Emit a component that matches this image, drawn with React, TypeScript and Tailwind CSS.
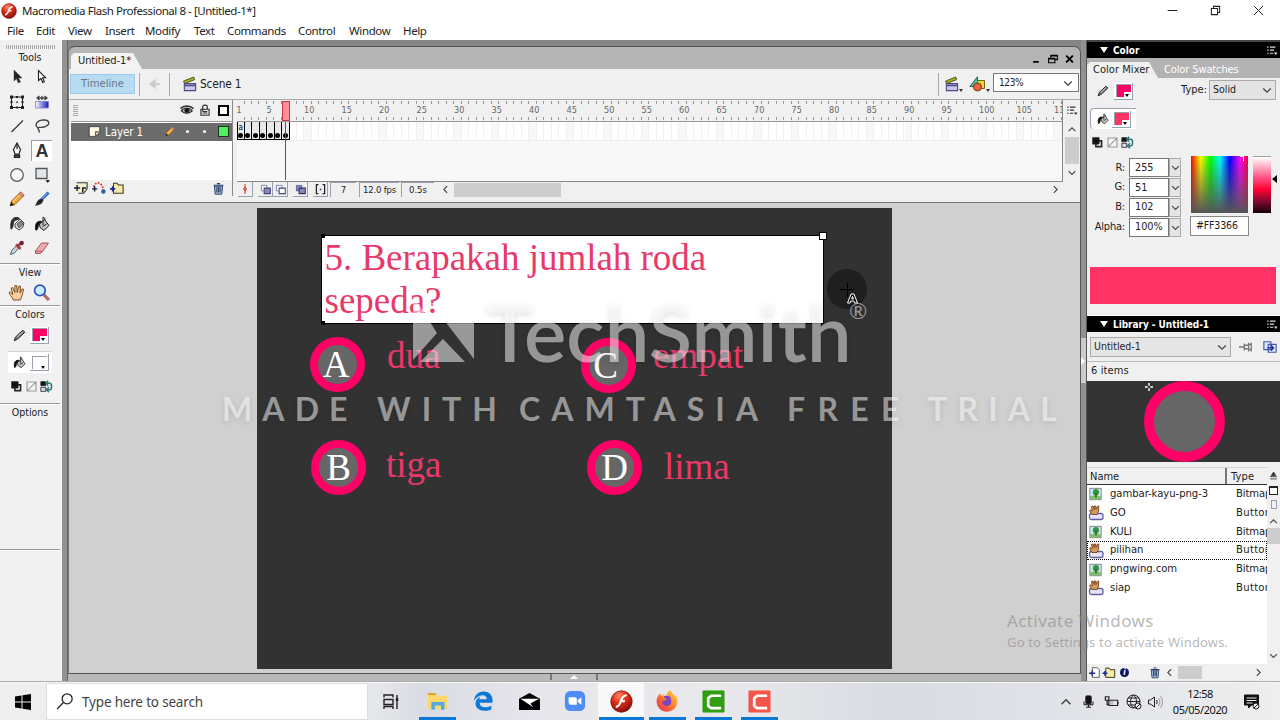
import React from "react";
import { FaFirefoxBrowser } from "react-icons/fa";

type IconProps = { className?: string; children: React.ReactNode; box?: string };

function Icon({ className = "h-4 w-4", children, box = "0 0 16 16" }: IconProps) {
  return (
    <svg viewBox={box} className={`shrink-0 ${className}`} fill="none" stroke="#333" strokeWidth="1">
      {children}
    </svg>
  );
}

function FlashLogo({ className }: { className?: string }) {
  return (
    <Icon className={className} box="0 0 24 24">
      <defs>
        <radialGradient id="flashRed" cx="40%" cy="25%" r="80%">
          <stop offset="0" stopColor="#ff8a6a" />
          <stop offset="0.45" stopColor="#dd2c16" />
          <stop offset="1" stopColor="#7c0d06" />
        </radialGradient>
      </defs>
      <circle cx="12" cy="12" r="11.2" fill="url(#flashRed)" stroke="#6d2018" strokeWidth="0.8" />
      <path d="M17.5 5.500c-4 0-5.200 3-6.200 6.200s-2 5.800-5.300 5.900M10.500 11.600h5" stroke="#fff" strokeWidth="2.200" />
    </Icon>
  );
}

function Pencil({ color = "#f3a63a", className }: { color?: string; className?: string }) {
  return (
    <Icon className={className}>
      <path d="M1 15l1.5-5L11 1.5 14.5 5 6 13.5z" fill={color} stroke="#7a4b16" strokeWidth=".8" />
      <path d="M10 2.5L12 .8 15.3 4 13.5 6z" fill="#e58d84" stroke="#944" strokeWidth=".6" />
      <path d="M1 15l1.2-4 3 3z" fill="#222" stroke="none" />
      <path d="M4 10.5L11 3.6" stroke="#ffe3a0" />
    </Icon>
  );
}

function PenTip({ className }: { className?: string }) {
  return (
    <Icon className={className}>
      <path d="M1.500 14.500l1.500-4.500L12 1.500 14.500 4 5.500 12.500z" fill="#777" stroke="#222" strokeWidth="1.200" />
      <path d="M5 10l7-6.500" stroke="#ddd" strokeWidth="1.200" />
    </Icon>
  );
}

function Bucket({ className }: { className?: string }) {
  return (
    <Icon className={className}>
      <path d="M5.500 8l5-4.500 4.500 6-5 5-4-3z" fill="#c4c4c4" stroke="#222" />
      <path d="M9 9V1.200c1.500 0 2 1 2 3M8.500 10.500l4-2.500" stroke="#222" />
      <path d="M7.500 5.500C3 4.500.8 7.500 1.800 14c2 .5 2.200-3 2.700-5z" fill="#111" stroke="#111" />
    </Icon>
  );
}

function InkBottle({ className }: { className?: string }) {
  return (
    <Icon className={className}>
      <path d="M6 8l5-5 4 4-1 4-4 3-4-3z" fill="#ddd" stroke="#444" />
      <path d="M8 8l4-3 2 3-4 4z" fill="#888" stroke="#555" />
      <path d="M10 2C4 0 1 4 2 13c2 0 2-4 2.500-7 1-2 3-2 5.500-3z" fill="#333" stroke="#222" />
    </Icon>
  );
}

function Trash({ className }: { className?: string }) {
  return (
    <Icon className={className}>
      <path d="M3 5h10l-1 10H4z" fill="#a7bfdf" stroke="#283f66" strokeWidth="1.2" />
      <path d="M2 4h12M6 2h4M6 6v7M8 6v7M10 6v7" stroke="#283f66" strokeWidth="1.3" />
    </Icon>
  );
}

function FolderAdd({ className }: { className?: string }) {
  return (
    <Icon className={className}>
      <path d="M4 4V2.500h4L9.500 4.500H15V14H4z" fill="#f5e9ab" stroke="#3d3512" strokeWidth="1.200" />
      <path d="M0 9h6M3 6v6" stroke="#1c2c8c" strokeWidth="1.800" />
    </Icon>
  );
}

function SwapRow() {
  return (
    <div className="flex gap-[2px]">
      <Icon className="h-[13px] w-[13px]">
        <path d="M6 6h7v7H6z" fill="#fff" stroke="#222" strokeWidth="2" />
        <path d="M2 2h8v8H2z" fill="#111" />
      </Icon>
      <Icon className="h-[13px] w-[13px]">
        <path d="M2.500 2.500h11v11h-11zM3 13L13 3" fill="#f5f5f5" stroke="#999" strokeWidth="1.400" />
      </Icon>
      <Icon className="h-[13px] w-[13px]">
        <path d="M1 2h6v5H1z" fill="#111" />
        <path d="M1 9h6v5H1z" fill="#ddd" stroke="#223" />
        <path d="M8 4h4c3 0 3 8 0 8H9M10 1L7.500 4l2.500 3M11 9l-3 3 3 3" stroke="#277878" strokeWidth="1.800" />
      </Icon>
    </div>
  );
}

function Swatch({ pink, tone }: { pink: boolean; tone?: boolean }) {
  const fill = pink ? (tone ? "bg-[#ff3366]" : "bg-[#ff0066]") : "bg-white";
  return (
    <div className="flex h-[17px] w-[19px] items-center justify-center border-r border-b border-gray-400 bg-white">
      <div className={`flex h-[13px] w-[15px] items-end justify-end border-t border-l border-gray-400 ${fill}`}>
        <div className="flex h-[5px] w-[7px] items-end justify-center bg-white">
          <div className="h-0 w-0 border-x-[2.5px] border-t-[3px] border-x-transparent border-t-black" />
        </div>
      </div>
    </div>
  );
}

function Chevron({ dir = "down", className = "h-[10px] w-[10px]" }: { dir?: string; className?: string }) {
  const d: Record<string, string> = {
    down: "M2 5.500l6 6 6-6",
    up: "M2 11l6-6 6 6",
    left: "M11 2L5 8l6 6",
    right: "M5 2l6 6-6 6",
  };
  return (
    <Icon className={className}>
      <path d={d[dir]} stroke="#444" strokeWidth="2" />
    </Icon>
  );
}

function MenuGlyph({ color }: { color: string }) {
  return (
    <Icon className="h-[11px] w-[12px]">
      <path d="M1 3h2M5 3h8M1 7.500h2M5 7.500h6M1 12h2M5 12h5" stroke={color} strokeWidth="1.700" />
      <path d="M11 11h5l-2.500 3.500z" fill={color} stroke="none" />
    </Icon>
  );
}

function Clapper({ className = "h-[14px] w-[15px]" }: { className?: string }) {
  return (
    <Icon className={className}>
      <path d="M1.500 5l11-4.500 1 2.800L3 7.500z" fill="#a3ad2c" stroke="#4b5113" />
      <path d="M2.500 7.500h12v7.500h-12z" fill="#c9c7ee" stroke="#4e4a83" strokeWidth="1.200" />
      <path d="M3 9.500h11" stroke="#4e4a83" strokeWidth="2" />
    </Icon>
  );
}

const toolIcons: React.ReactNode[] = [
  <Icon><path d="M5 1v11l2.500-2.200L9.300 14l2.200-1-1.900-4H13z" fill="#222" stroke="#555" strokeWidth=".6" /></Icon>,
  <Icon><path d="M4.500 1.500v10l2.500-2 1.700 4 1.700-.7-1.800-4h3z" fill="#fff" stroke="#222" strokeWidth="1.100" /></Icon>,
  <Icon>
    <path d="M2.500 3h11v10.500h-11z" stroke="#222" />
    <path d="M1 1.500h3v3H1zM12 1.500h3v3h-3zM1 12h3v3H1zM12 12h3v3h-3zM7 2h2v2H7zM7 12.500h2v2H7zM1.500 7h2v2h-2zM12.500 7h2v2h-2zM7.300 7.500h1.500V9H7.300z" fill="#222" stroke="none" />
  </Icon>,
  <Icon>
    <defs><linearGradient id="toolBlue"><stop stopColor="#fff" /><stop offset="1" stopColor="#1a17b8" /></linearGradient></defs>
    <path d="M1.500 7.500h13V14h-13z" fill="url(#toolBlue)" stroke="#7780c8" strokeWidth=".8" />
    <path d="M3 4h10M5.500 2L3 4l2.500 2M10.500 2L13 4l-2.500 2M8 2v4" stroke="#444" strokeWidth="1.300" />
  </Icon>,
  <Icon><path d="M2.500 14L14 2.500" stroke="#333" strokeWidth="1.200" /></Icon>,
  <Icon><path d="M4.500 10C0 8 2 2.500 9 2s8 5 1 7c-3 1-6-.5-6 1.500s2 1 1 4" stroke="#444" strokeWidth="1.400" /></Icon>,
  <Icon>
    <path d="M8 1l3.500 6.500L10 12H6L4.500 7.500z" fill="#fff" stroke="#222" strokeWidth="1.200" />
    <path d="M8 2v5M5.500 13h5v2.500h-5z" fill="#556" stroke="#222" strokeWidth="1.300" />
  </Icon>,
  <span className="font-['Liberation_Sans',sans-serif] text-[18px] leading-none font-bold text-[#333]">A</span>,
  <Icon><circle cx="8" cy="8" r="6.300" fill="#f7f7f7" stroke="#555" strokeWidth="1.200" /></Icon>,
  <Icon>
    <path d="M2 1.500h11v10H2z" fill="#dfe7ec" stroke="#555" strokeWidth="1.300" />
    <path d="M11.500 13.300h4.500l-2.200 2.500z" fill="#000" stroke="none" />
  </Icon>,
  <Pencil className="h-4 w-4" />,
  <Icon>
    <path d="M14.500 1.500L7 9" stroke="#2b5fc4" strokeWidth="3" />
    <path d="M13.500 2L7 8.500" stroke="#9cc3ff" />
    <path d="M8 8l1 1.500c-1 4-4 4-7.500 5 1.500-2 1.500-5 4-6z" fill="#222" stroke="#223" strokeWidth=".6" />
  </Icon>,
  <InkBottle className="h-4 w-4" />,
  <Bucket className="h-4 w-4" />,
  <Icon>
    <path d="M1.500 14.500L3 10l5-4.500 2 2L5.500 13z" fill="#bcd8ea" stroke="#456" strokeWidth=".9" />
    <path d="M7 4.500l4.500 4.500M9 6l3.500-3.500" stroke="#b03a42" strokeWidth="2.800" />
    <circle cx="12.700" cy="3" r="2.200" fill="#6c2530" stroke="none" />
  </Icon>,
  <Icon><path d="M1.500 11L7.500 3h7l-6 8.500-2 2h-5zM8.500 11.500l-7-.3" fill="#f0a9ad" stroke="#9a5a5e" /></Icon>,
];

function ToolSeparator() {
  return <div className="h-[2px] w-[60px] border-t border-[#999] bg-white" />;
}

function ToolsPanel() {
  return (
    <aside className="flex w-[62px] shrink-0 flex-col bg-[#f1f1f1] text-[10.500px] text-[#222]">
      <div className="mt-[5px] ml-[6px] h-[4px] w-[50px] bg-[repeating-linear-gradient(90deg,#aaa_0_1px,transparent_1px_2px)]" />
      <div className="h-[16px] w-[60px] text-center leading-[17px]">Tools</div>
      <div className="ml-1 grid w-[50px] grid-cols-2">
        {toolIcons.map((icon, i) => (
          <div key={i} className="flex h-[24.400px] items-center justify-center">
            {i === 7 ? (
              <div className="flex h-[21px] w-[21px] items-center justify-center border-t border-l border-gray-400 bg-white">{icon}</div>
            ) : (
              icon
            )}
          </div>
        ))}
      </div>
      <div className="h-[3px]" />
      <ToolSeparator />
      <div className="h-[15px] w-[60px] text-center leading-[15px]">View</div>
      <div className="ml-1 grid h-[25px] w-[50px] grid-cols-2 place-items-center">
        <Icon className="h-[17px] w-[17px]">
          <path d="M5 15c-1-3-4-5-4-7l1-.7L4.500 10 3 4l1.500-.7L6.500 8V1.500h1.600L8.700 8l1.500-6h1.500l-.3 6.500 2-4 1.300.5c-1 4-1.500 7-3 10z" fill="#f8cf9a" stroke="#77461f" strokeWidth=".9" />
        </Icon>
        <Icon className="h-[17px] w-[17px]">
          <path d="M10 10l5 5" stroke="#b46a68" strokeWidth="3" />
          <circle cx="6.500" cy="6" r="5" fill="#c9ecff" stroke="#2e55bd" strokeWidth="1.600" />
        </Icon>
      </div>
      <ToolSeparator />
      <div className="h-[16px] w-[60px] text-center leading-[15px]">Colors</div>
      <div className="ml-2 flex h-[24px] w-[44px] items-center gap-[4px] pl-[5px]">
        <PenTip className="h-[13px] w-[13px]" />
        <Swatch pink />
      </div>
      <div className="mt-[4px] ml-2 flex h-[22px] w-[44px] items-center gap-[4px] border-t border-gray-300 bg-white pl-[5px]">
        <Bucket className="h-[13px] w-[13px]" />
        <Swatch pink={false} />
      </div>
      <div className="mt-[7px] ml-[10px] h-[23px]">
        <SwapRow />
      </div>
      <ToolSeparator />
      <div className="h-[15px] w-[60px] text-center leading-[15px]">Options</div>
      <div className="mt-[129px]">
        <ToolSeparator />
      </div>
    </aside>
  );
}

function Timeline() {
  const labels = [1];
  for (let n = 5; n <= 110; n += 5) labels.push(n);
  return (
    <section className="flex h-[104px] shrink-0 border-t border-b border-t-[#aaa] border-b-[#777] bg-[#f0f0f0] pb-[6px]">
      <div className="flex w-[164px] shrink-0 flex-col border-r border-[#888] pl-[2px]">
        <div className="flex h-[22px] items-center border-b border-[#999] pr-[3px]">
          <div className="mr-auto ml-[2px] h-[11px] w-[5px] bg-[repeating-linear-gradient(0deg,#aaa_0_1px,transparent_1px_2px)]" />
          <Icon className="mr-[5px] h-[14px] w-[14px]">
            <path d="M1.500 9c3-4 10-4 12.500 0-4 3.500-8.500 3.500-12.500 0z" fill="#bbb" stroke="#222" strokeWidth="1.300" />
            <path d="M.5 6.500C4 3 11 2.500 15.500 6.500" stroke="#333" strokeWidth="2" />
            <circle cx="8" cy="8.500" r="2.600" fill="#111" />
          </Icon>
          <Icon className="mr-[7px] h-[14px] w-[12px]">
            <path d="M2.500 7h11v8h-11z" fill="#ddd" stroke="#333" strokeWidth="1.500" />
            <path d="M5 10V3c1-2 5-2 6 0v4M5 10h6M5 12h6" stroke="#333" strokeWidth="1.600" />
          </Icon>
          <div className="h-[11px] w-[11px] border-2 border-black bg-white" />
        </div>
        <div className="flex h-[19px] items-center border-t border-white bg-[#6c6c6c] pr-[3px] pl-[17px]">
          <Icon className="h-[13px] w-[13px]">
            <path d="M1.500 2h13v7l-5 5h-8z" fill="#fffbe5" stroke="#333" />
            <path d="M14.500 8.500h-5V14" stroke="#554" strokeWidth="1.500" />
          </Icon>
          <span className="ml-[4px] pt-px text-[11.500px] tracking-[-0.100px] text-white">Layer 1</span>
          <Pencil className="mr-[11px] ml-auto h-[13px] w-[10px]" />
          <div className="mr-[14px] h-[3px] w-[3px] rounded-full bg-white" />
          <div className="mr-[12px] h-[3px] w-[3px] rounded-full bg-white" />
          <div className="h-[11px] w-[11px] border border-[#173817] bg-[#55f060]" />
        </div>
        <div className="h-[40px] bg-white" />
        <div className="flex h-[16px] items-center gap-[4px] pr-[7px] pl-[3px]">
          <Icon className="h-[14px] w-[14px]">
            <path d="M3 2h12v7l-4 5H5" fill="#f3efc8" stroke="#333" strokeWidth="1.200" />
            <path d="M14 8h-4v5M0 8h7M3.500 4.500v7" stroke="#223" strokeWidth="1.700" />
          </Icon>
          <Icon className="h-[14px] w-[14px]">
            <path d="M2 7c2-7 9-7 11 3" stroke="#d33" strokeWidth="2" strokeDasharray="2 1.500" />
            <path d="M0 9h6M3 6v6" stroke="#223" strokeWidth="1.700" />
            <circle cx="13" cy="12" r="2.500" fill="#335aa6" stroke="none" />
          </Icon>
          <FolderAdd className="h-[14px] w-[14px]" />
          <Trash className="ml-auto h-[13px] w-[13px]" />
        </div>
      </div>
      <div className="flex min-w-0 flex-1 flex-col">
        <div className="flex h-[82px]">
          <div className="ml-[4px] flex w-[827px] flex-col border-r border-b border-[#888]">
            <div className="relative h-[22px] overflow-hidden border-b border-[#999]">
              <div className="h-[3px] w-full translate-y-px bg-[repeating-linear-gradient(90deg,transparent_0_6.500px,#999_6.500px_7.500px)]" />
              <div className="mt-[13px] h-[3px] w-full translate-y-px bg-[repeating-linear-gradient(90deg,transparent_0_6.500px,#999_6.500px_7.500px)]" />
              {labels.map((n) => (
                <span key={n} className="absolute top-[5px] text-[9px] leading-[10px] text-[#666]" style={{ left: (n - 1) * 7.5 - 0.5 }}>
                  {n}
                </span>
              ))}
              <div className="absolute top-[1px] left-[45px] h-[20px] w-[8px] border border-[#c03a3f] bg-[#ff8f92]" />
            </div>
            <div className="relative flex h-[18px] bg-white bg-[repeating-linear-gradient(90deg,transparent_0_6.500px,#f0f0f0_6.500px_7.500px),repeating-linear-gradient(90deg,transparent_0_30px,#f8f8f8_30px_37.500px)]">
              {[1, 2, 3, 4, 5, 6, 7].map((n) => (
                <div key={n} className="flex h-[18px] w-[7.500px] flex-col items-center justify-end border-r border-b border-black bg-[#e9e9e9] pb-[1px] first:border-l">
                  {n === 1 && <span className="h-[9px] text-[8px] leading-[8px] text-black">a</span>}
                  <div className="h-[5px] w-[5px] shrink-0 rounded-full bg-black" />
                </div>
              ))}
              <div className="absolute top-0 left-[48px] z-10 h-[58px] w-px bg-[#d8222a]" />
            </div>
            <div className="h-[41px] border-t border-[#eee] bg-[#f8f8f8]" />
          </div>
          <div className="flex w-[17px] flex-col items-center justify-between pt-[5px] pb-[5px]">
            <MenuGlyph color="#333" />
            <Chevron dir="up" className="mt-[5px] h-[9px] w-[10px]" />
            <div className="h-[27px] w-[14px] bg-[#cdcdcd]" />
            <Chevron className="h-[9px] w-[10px]" />
          </div>
        </div>
        <div className="flex h-[15px] items-center pr-[20px] text-[9.500px] text-[#222]">
          <div className="ml-[5px] flex h-[15px] w-[15px] justify-center border-r border-b border-gray-400">
            <Icon className="h-[14px] w-[10px]"><path d="M8 0v16M8 5l2.500 3L8 11 5.500 8z" stroke="#d22" strokeWidth="1.600" /></Icon>
          </div>
          <div className="ml-[5px] flex h-[15px] w-[15px] items-center justify-center border-r border-b border-gray-400">
            <Icon className="h-[11px] w-[11px]"><path d="M2 2h8v8H2z" fill="#fff" stroke="#55558c" /><path d="M6 6h9v8H6z" fill="#8986ba" stroke="#44447a" strokeWidth="1.500" /></Icon>
          </div>
          <div className="flex h-[15px] w-[15px] items-center justify-center border-r border-b border-gray-400">
            <Icon className="h-[11px] w-[11px]"><path d="M2 2h8v8H2z" fill="#fff" stroke="#55558c" /><path d="M6 6h9v8H6z" fill="#fff" stroke="#44447a" strokeWidth="1.500" /></Icon>
          </div>
          <div className="ml-[5px] flex h-[15px] w-[15px] items-center justify-center border-r border-b border-gray-400">
            <Icon className="h-[11px] w-[11px]"><path d="M2 2h8v8H2z" fill="#8986ba" stroke="#44447a" /><path d="M6 6h9v8H6z" fill="#8986ba" stroke="#33336a" strokeWidth="1.500" /></Icon>
          </div>
          <div className="ml-[5px] flex h-[15px] w-[15px] items-center justify-center border-r border-b border-gray-400">
            <Icon className="h-[11px] w-[11px]"><path d="M5 1H2v13h3M11 1h3v13h-3" stroke="#222" strokeWidth="1.800" /><path d="M7 7h2v2H7z" fill="#222" stroke="none" /></Icon>
          </div>
          <div className="ml-[2px] flex h-[15px] w-[26px] items-center justify-center border-t border-l border-gray-400">7</div>
          <div className="ml-[3px] flex h-[15px] w-[40px] items-center justify-center border-t border-l border-gray-400 tracking-[-0.2px] whitespace-nowrap">12.0 fps</div>
          <div className="ml-[2px] flex h-[15px] w-[33px] items-center justify-center border-t border-l border-gray-400">0.5s</div>
          <Chevron dir="left" className="ml-[7px] h-[9px] w-[9px]" />
          <div className="ml-[4px] h-[14px] w-[107px] bg-[#cdcdcd]" />
          <Chevron dir="right" className="ml-auto h-[9px] w-[9px]" />
        </div>
      </div>
    </section>
  );
}

function Bubble({ letter, className }: { letter: string; className: string }) {
  return (
    <div className={`absolute flex h-[55px] w-[55px] items-center justify-center rounded-full border-[8px] border-[#ff0066] bg-[#666] text-white ${className}`}>
      <span className="leading-[37px]">{letter}</span>
    </div>
  );
}

function Stage() {
  return (
    <div className="flex min-h-0 flex-1 bg-[#d0d0d0] pt-[5px] pl-[188px]">
      <div className="relative h-[461px] w-[635px] bg-[#323232] font-['Liberation_Serif',serif] text-[37px] leading-[37px] text-[#e8396a]">
        <div className="absolute top-[27px] left-[64px] h-[89px] w-[503px] border border-black bg-white pl-[2.500px] leading-[43px] tracking-[-0.020px] whitespace-nowrap">
          <div>5. Berapakah jumlah roda</div>
          <div>sepeda?</div>
        </div>
        <div className="absolute top-[26px] left-[64px] h-1 w-1 bg-black" />
        <div className="absolute top-[113px] left-[64px] h-1 w-1 bg-black" />
        <div className="absolute top-[24px] left-[562px] h-[8px] w-[8px] border border-black bg-white" />
        <Bubble letter="A" className="top-[129px] left-[53px] pr-[3px]" />
        <Bubble letter="C" className="top-[130px] left-[324px] pr-[6px]" />
        <Bubble letter="B" className="top-[232px] left-[54px]" />
        <Bubble letter="D" className="top-[232px] left-[330px]" />
        <span className="absolute top-[129px] left-[130px]">dua</span>
        <span className="absolute top-[129px] left-[396px]">empat</span>
        <span className="absolute top-[238px] left-[129px]">tiga</span>
        <span className="absolute top-[240px] left-[407px]">lima</span>
        <div className="absolute top-[61px] left-[570px] h-[40px] w-[40px] rounded-full bg-[#1f1f1f]" />
        <svg className="absolute top-[73px] left-[582px] h-[24px] w-[24px]" viewBox="0 0 24 24">
          <path d="M1 8.500h14M8.500 2v14" stroke="#000" />
          <path d="M8.500 22l3.500-9h3l3.500 9h-3l-.7-2h-3l-.7 2zM12.700 18h1.700l-.9-2.600z" fill="#111" stroke="#fff" />
        </svg>
      </div>
    </div>
  );
}

function DocumentWindow() {
  return (
    <main className="flex min-w-0 flex-1 flex-col">
      <div className="mt-[6px] flex h-[628px] flex-col overflow-hidden rounded-t-[7px] border border-[#555] border-l-[#777]">
        <div className="flex h-[22px] shrink-0 items-end bg-[#b5b5b5] pr-[6px]">
          <div className="ml-[2px] flex h-[16px] w-[71px] items-center bg-[#f3f3f3] pt-px pl-[7px] text-[11px] tracking-[-0.080px] whitespace-nowrap [clip-path:polygon(0_3px,3px_0,62px_0,71px_100%,0_100%)]">
            Untitled-1*
          </div>
          <div className="mb-[5px] ml-auto flex items-center gap-[7px]">
            <Icon className="h-[10px] w-[9px]"><path d="M2 13h10" stroke="#000" strokeWidth="3" /></Icon>
            <Icon className="h-[10px] w-[10px]"><path d="M1 7h10v7H1zM1 8h10M4.500 6V2H15v7h-3M4.500 3H15" stroke="#000" strokeWidth="1.800" /></Icon>
            <Icon className="h-[10px] w-[9px]"><path d="M2 2l12 12M14 2L2 14" stroke="#000" strokeWidth="3.400" /></Icon>
          </div>
        </div>
        <div className="flex h-[30px] shrink-0 items-center bg-[#f0f0f0] pl-[1px]">
          <div className="flex h-[20px] w-[65px] items-center justify-center border border-[#9ccbea] bg-[#b9dbf2] text-[11.200px] text-[#66788a]">Timeline</div>
          <div className="ml-[4px] h-[23px] w-px bg-[#aaa]" />
          <Icon className="mx-[8px] h-[12px] w-[13px]"><path d="M15 8H5M8 4L3 8l5 4z" fill="#ccc" stroke="#ccc" strokeWidth="3" /></Icon>
          <div className="h-[23px] w-px bg-[#aaa]" />
          <Clapper className="ml-[12px] h-[16px] w-[15px]" />
          <span className="ml-[3px] pt-px text-[11.800px] tracking-[-0.150px]">Scene 1</span>
          <div className="ml-auto h-[23px] w-px bg-[#aaa]" />
          <Clapper className="ml-[5px] h-[16px] w-[15px]" />
          <div className="mt-3 h-0 w-0 border-x-[2.500px] border-t-[3px] border-x-transparent border-t-[#333]" />
          <Icon className="ml-[6px] h-[16px] w-[17px]">
            <path d="M.5 10.500L8 .8v9.700z" fill="#4fc3a0" stroke="#20624f" />
            <path d="M8 4.500h7v8H8z" fill="#e9d23b" stroke="#746416" />
            <circle cx="8" cy="11" r="4" fill="#e8623a" stroke="#8b3316" />
          </Icon>
          <div className="mt-3 h-0 w-0 border-x-[2.500px] border-t-[3px] border-x-transparent border-t-[#333]" />
          <div className="mr-px mb-[3px] ml-[3px] flex h-[19px] w-[86px] items-center justify-between border border-[#777] bg-white px-[5px] text-[10px] tracking-[-0.400px]">
            123%
            <Chevron />
          </div>
        </div>
        <Timeline />
        <Stage />
      </div>
      <div className="flex flex-1 justify-center bg-[#b9b9b9] pr-[1px]">
        <div className="flex h-[6px] w-[48px] items-center justify-center border-x-2 border-[#777] bg-[#bbb]">
          <div className="h-0 w-0 border-x-[4px] border-b-[4px] border-x-transparent border-b-white" />
        </div>
      </div>
    </main>
  );
}

function PanelHeader({ title, className = "" }: { title: string; className?: string }) {
  return (
    <div className={`flex h-[16px] shrink-0 items-center bg-black pr-[2px] pl-[13px] text-[10px] font-bold text-white ${className}`}>
      <div className="mr-[5px] h-0 w-0 border-x-[4px] border-t-[6px] border-x-transparent border-t-white" />
      {title}
      <div className="ml-auto"><MenuGlyph color="#ddd" /></div>
    </div>
  );
}

function Field({ label, value }: { label: string; value: string }) {
  return (
    <div className="flex h-[19.800px] items-center">
      <span className="w-[38px] text-right text-[11px] tracking-[-0.2px]">{label}</span>
      <div className="ml-[4px] flex h-[19px] w-[40px] items-center border border-[#777] bg-white pl-[5px] text-[10.800px]">{value}</div>
      <div className="flex h-[19px] w-[12px] items-center justify-center border border-[#aaa] bg-[#e5e5e5]"><Chevron className="h-[9px] w-[9px]" /></div>
    </div>
  );
}

function ColorPanel() {
  return (
    <section className="flex h-[275px] shrink-0 flex-col bg-[#f0f0f0]">
      <div className="h-[2px] bg-[#444]" />
      <PanelHeader title="Color" />
      <div className="flex h-[20px] items-end bg-[#b3b3b3] text-[11px]">
        <div className="flex h-[16px] w-[72px] items-center bg-[#f0f0f0] pl-[6px] tracking-[0.05px] whitespace-nowrap [clip-path:polygon(0_3px,3px_0,62px_0,71px_100%,0_100%)]">Color Mixer</div>
        <span className="ml-[5px] leading-[16px] tracking-[-0.120px] text-white">Color Swatches</span>
      </div>
      <div className="flex justify-between pr-[4px]">
        <div className="pt-[2px] pl-[3px]">
          <div className="flex h-[22px] items-center gap-[5px] pl-[7px]">
            <PenTip className="h-[12px] w-[12px]" />
            <Swatch pink />
          </div>
          <div className="mt-[6px] flex h-[21px] w-[46px] items-center gap-[3px] rounded-l border-t border-l border-gray-400 bg-white pl-[6px]">
            <Bucket className="h-[12px] w-[12px]" />
            <Swatch pink tone />
          </div>
          <div className="mt-[7px] pl-[1px]"><SwapRow /></div>
        </div>
        <div className="mt-[2px] flex h-[20px] items-center text-[11px]">
          Type:
          <div className="ml-[2px] flex h-[20px] w-[67px] items-center justify-between border border-[#aaa] bg-[#e4e4e4] px-[3px] text-[10.500px]">
            Solid
            <Chevron />
          </div>
        </div>
      </div>
      <div className="mt-[7px] flex">
        <div className="mt-[2px] flex flex-col">
          <Field label="R:" value="255" />
          <Field label="G:" value="51" />
          <Field label="B:" value="102" />
          <Field label="Alpha:" value="100%" />
        </div>
        <div className="ml-[9px] flex flex-col">
          <div className="flex">
            <div className="ml-px flex h-[57px] w-[57px] justify-end bg-[linear-gradient(to_top,#555_0%,transparent_100%),linear-gradient(to_right,#f00,#ff0_17%,#0f0_34%,#0ff_51%,#00f_68%,#f0f_86%,#f03)] pr-[4px]">
              <div className="h-[5px] w-[4px] border-t border-r border-white" />
            </div>
            <div className="ml-[5px] h-[57px] w-[18px] border-t border-gray-400 bg-[linear-gradient(to_bottom,#fff,#ff4d80_38%,#f03_58%,#7b0930_80%,#140007)]" />
            <div className="mt-[19px] ml-px h-0 w-0 border-y-[4px] border-r-[5px] border-y-transparent border-r-black" />
          </div>
          <div className="mt-[3px] flex h-[20px] w-[59px] items-center border border-[#888] bg-white pl-[5px] text-[10.500px] tracking-[-0.150px]">#FF3366</div>
        </div>
      </div>
      <div className="mt-auto mb-[11px] ml-[3px] h-[37px] w-[186px] bg-[#ff3366]" />
    </section>
  );
}

function BitmapIcon() {
  return (
    <Icon className="h-[14px] w-[15px]">
      <path d="M1.500 1.500h13v13h-13z" fill="#ccecf7" stroke="#777" />
      <circle cx="8.500" cy="6" r="3.600" fill="#389347" stroke="none" />
      <path d="M2 10.500c4-1.500 8-1.500 12 0V14H2z" fill="#7cc26b" stroke="none" />
      <path d="M8.500 7v5" stroke="#4d4a1c" strokeWidth="1.600" />
    </Icon>
  );
}

function ButtonIcon() {
  return (
    <Icon className="h-[16px] w-[16px]">
      <rect x="1.500" y="8.500" width="13.500" height="6" rx="2" fill="#e6e4fa" stroke="#6460a0" strokeWidth="1.300" />
      <path d="M4 9.500L1.500 5.500l1.200-.8L4.300 6 3.500 1.500 5 1l1.300 3.500V1h1.400l.4 3.500L9.500 1l1.300.2-.3 5L9 9.500z" fill="#d69a5c" stroke="#774016" strokeWidth=".9" />
    </Icon>
  );
}

const libraryItems = [
  { name: "gambar-kayu-png-3", kind: "Bitmap" },
  { name: "GO", kind: "Button" },
  { name: "KULI", kind: "Bitmap" },
  { name: "pilihan", kind: "Button" },
  { name: "pngwing.com", kind: "Bitmap" },
  { name: "siap", kind: "Button" },
];

function LibraryPanel() {
  return (
    <section className="flex min-h-0 flex-1 flex-col bg-[#f0f0f0]">
      <div className="h-px shrink-0 bg-white" />
      <PanelHeader title="Library - Untitled-1" className="tracking-[-0.050px]" />
      <div className="flex h-[30px] shrink-0 items-center border-b border-[#bbb] pt-px pr-[3px] pl-[3px]">
        <div className="flex h-[20px] w-[141px] items-center justify-between border border-[#aaa] bg-[#e5e5e5] px-[3px] text-[10.500px]">
          Untitled-1
          <Chevron />
        </div>
        <Icon className="ml-auto h-[14px] w-[14px]"><path d="M0 8h6M6 4v8M6 6h5v4H6M11 3v10M14 3v10M11 5h3M11 11h3" stroke="#777" strokeWidth="1.500" /></Icon>
        <Icon className="ml-[10px] h-[14px] w-[14px]"><path d="M1 2h8v9H1zM6 5h9v9H6z" fill="#e1e6ff" stroke="#4458a0" strokeWidth="1.300" /><path d="M5 9h7M9 6l3 3-3 3" stroke="#14289c" strokeWidth="1.500" /></Icon>
      </div>
      <div className="h-[19px] shrink-0 pl-[4px] text-[11px] leading-[17px] tracking-[0.1px]">6 items</div>
      <div className="relative h-[81px] shrink-0 bg-[#333]">
        <div className="absolute top-0 left-[57px] h-[81px] w-[81px] rounded-full border-[10px] border-[#ff0066] bg-[#666]" />
        <Icon className="absolute top-[2px] left-[58px] h-[8px] w-[8px]"><path d="M8 0v16M0 8h16" stroke="#fff" strokeWidth="3" /><path d="M6 6h4v4H6z" fill="#333" /></Icon>
      </div>
      <div className="flex min-h-0 flex-1 pt-[5px]">
        <div className="flex w-[180px] shrink-0 flex-col bg-white">
          <div className="flex h-[17.500px] shrink-0 border-t border-b border-t-gray-300 border-b-[#333] bg-[#f0f0f0] text-[11px] leading-[17px]">
            <span className="w-[140px] border-r-2 border-[#777] pl-[3px]">Name</span>
            <span className="pl-[4px] tracking-[0.2px]">Type</span>
          </div>
          {libraryItems.map((item) => (
            <div
              key={item.name}
              className={`flex h-[18.800px] shrink-0 items-center overflow-hidden pt-px text-[11.200px] whitespace-nowrap ${item.name === "pilihan" ? "border border-dotted border-black pl-0" : "pl-[1px]"}`}
            >
              <span className="flex w-[16px] shrink-0">{item.kind === "Bitmap" ? <BitmapIcon /> : <ButtonIcon />}</span>
              <span className="ml-[6px] w-[126px] shrink-0 tracking-[-0.050px]">{item.name}</span>
              <span className={item.kind === "Bitmap" ? "tracking-[-0.100px]" : "tracking-[0.300px]"}>{item.kind}</span>
            </div>
          ))}
        </div>
        <div className="flex flex-1 flex-col items-center bg-[#f0f0f0]">
          <div className="flex h-[17px] items-center"><Icon className="h-[9px] w-[9px]"><path d="M8 2l4 6H4zM2 10h12M2 14h12" fill="#333" stroke="#333" strokeWidth="1.500" /></Icon></div>
          <div className="mt-[2px] h-[9px] w-[9px] border-[1.500px] border-t-2 border-[#222] bg-white" />
          <div className="mt-[5px] h-[9px] w-[6px] border border-gray-400" />
          <Chevron dir="up" className="mt-[8px] h-[9px] w-[9px]" />
          <div className="mt-[2px] h-[16px] w-full bg-[#cdcdcd]" />
          <Chevron className="mt-auto mb-[4px] h-[9px] w-[9px]" />
        </div>
      </div>
      <div className="flex h-[17px] shrink-0 items-center pl-[2px]">
        <Icon className="h-[11px] w-[11px]"><path d="M5 1h7l3 3v11H5z" fill="#fff" stroke="#222" /><path d="M0 9h9M4.500 5v8" stroke="#1c2c8c" strokeWidth="2" /></Icon>
        <FolderAdd className="ml-[2px] h-[13px] w-[14px]" />
        <div className="ml-[4px] flex h-[9px] w-[9px] items-center justify-center rounded-full bg-[#101066] text-[8px] font-bold text-white italic">i</div>
        <Trash className="ml-[20px] h-[13px] w-[12px]" />
        <Chevron dir="left" className="ml-[4px] h-[9px] w-[9px]" />
        <div className="ml-[4px] h-[13px] w-[24px] bg-[#cdcdcd]" />
        <Chevron dir="right" className="mr-[17px] ml-auto h-[9px] w-[9px]" />
      </div>
    </section>
  );
}

function TaskApp({ children, active, current }: { children: React.ReactNode; active?: boolean; current?: boolean }) {
  return (
    <div className={`flex h-full w-[46px] flex-col items-center ${current ? "bg-[#f8f8f8]" : ""}`}>
      <div className="flex flex-1 items-center pt-[2px]">{children}</div>
      <div className={`h-[3px] ${current ? "w-[45px]" : "w-[37px]"} ${active ? "bg-[#0a78d4]" : ""}`} />
    </div>
  );
}

function Camtasia({ color }: { color: string }) {
  return (
    <Icon className="h-[23px] w-[23px]" box="0 0 24 24">
      <path d="M1 1h22v22H1z" fill={color} stroke={color} />
      <path d="M20 6H9.500L6.500 8.500v8L9.500 19H20" stroke="#fff" strokeWidth="2.800" />
    </Icon>
  );
}

function Taskbar() {
  return (
    <footer className="flex h-[38px] shrink-0 border-t border-[#f8f8f8] bg-[linear-gradient(to_right,#eee_0,#eee_27%,#d9dce3_33%,#e6e6ec_42%,#e9e9ec_56%,#d8dbe2_70%,#e2e4e9_85%,#eee)] font-['Noto_Sans',sans-serif]">
      <div className="flex w-[46px] items-center justify-center">
        <Icon className="h-[16px] w-[16px]"><path d="M0 2.500l6.500-1v6H0zM7.500 1.300L16 0v7.500H7.500zM0 8.500h6.500v6L0 13.500zM7.500 8.500H16V16l-8.500-1.300z" fill="#000" stroke="none" /></Icon>
      </div>
      <div className="flex h-[37px] w-[322px] items-center border border-[#ddd] bg-white pl-[9px]">
        <Icon className="h-[17px] w-[17px]"><circle cx="10.500" cy="5.500" r="4.700" stroke="#222" strokeWidth="1.200" /><path d="M7 9l-6 6" stroke="#222" strokeWidth="1.200" /></Icon>
        <span className="ml-[9px] pt-px text-[13.500px] tracking-[-0.180px] text-[#444]">Type here to search</span>
      </div>
      <div className="flex w-[46px] items-center justify-center">
        <Icon className="h-[16px] w-[16px]"><path d="M1 3.500V1h9v2.500M1 5.500h9v5H1zM1 15v-2.500h9V15M14 1v3M14 6v9" stroke="#222" strokeWidth="1.400" /><path d="M12.800 4h2.500v3h-2.500z" fill="#222" stroke="none" /></Icon>
      </div>
      <TaskApp active>
        <Icon className="h-[20px] w-[21px]" box="0 0 24 22">
          <path d="M1 2h9l2 3h11v15H1z" fill="#f9d76a" stroke="none" />
          <path d="M1 2h9v2H1z" fill="#d9971c" stroke="none" />
          <path d="M5 21v-9h15v9h-4v-5H9v5z" fill="#56a7dc" stroke="none" />
        </Icon>
      </TaskApp>
      <TaskApp>
        <Icon className="h-[20px] w-[20px]" box="0 0 24 24">
          <path d="M1 12C2 4 7 .5 13 .5c7 0 10.500 5 10.500 10.500V14H8c.3 4 3 5.500 7 5.500 3 0 5-.7 7-1.800v4.500c-2 1-4.500 1.500-8 1.500C7 23.700 3 20 3 15c0-4 2.500-7 6-8.500C8 7.700 7.500 8.700 7.500 10h9c0-3-1.500-5-5-5C7 5 3.500 8 1 12z" fill="#0f78d4" stroke="none" />
        </Icon>
      </TaskApp>
      <TaskApp>
        <Icon className="h-[19px] w-[23px]" box="0 0 24 20">
          <path d="M1 7L12 1l11 6v12H1z" fill="#000" stroke="none" />
          <path d="M2.500 7L22 7l-9 5 3 4z" fill="#fff" stroke="none" />
        </Icon>
      </TaskApp>
      <TaskApp>
        <Icon className="h-[22px] w-[22px]" box="0 0 24 24">
          <rect x="1" y="1" width="22" height="22" rx="6" fill="#4d8df5" stroke="none" />
          <path d="M5 8h7q2 0 2 2v6H7q-2 0-2-2zM15 11l4-3v8l-4-3z" fill="#fff" stroke="none" />
        </Icon>
      </TaskApp>
      <TaskApp active current><FlashLogo className="h-[23px] w-[23px]" /></TaskApp>
      <TaskApp active>
        <svg viewBox="0 0 512 512" className="h-[22px] w-[22px]">
          <defs>
            <linearGradient id="fox" x1="1" y1="0" x2="0" y2="1">
              <stop offset="0" stopColor="#ffe14d" />
              <stop offset="0.500" stopColor="#ff7b28" />
              <stop offset="1" stopColor="#e22769" />
            </linearGradient>
          </defs>
          <circle cx="256" cy="280" r="150" fill="#7843c9" />
          <FaFirefoxBrowser size={512} fill="url(#fox)" />
        </svg>
      </TaskApp>
      <TaskApp active><Camtasia color="#2f9e12" /></TaskApp>
      <TaskApp active><Camtasia color="#f3574c" /></TaskApp>
      <div className="ml-auto flex items-center pr-[20px]">
        <Chevron dir="up" className="h-[12px] w-[12px]" />
        <Icon className="ml-[10px] h-[15px] w-[13px]"><rect x="4.500" y="1" width="7" height="10" rx="1.500" fill="#111" /><path d="M2.500 8v4h11V8M8 12v3M5 15h6" stroke="#111" strokeWidth="1.200" /></Icon>
        <Icon className="ml-[9px] h-[14px] w-[15px]"><path d="M5 6h10v6H5zM15.500 8v2M1 2h4v4H1zM3 6v5h2" stroke="#222" strokeWidth="1.400" /><path d="M6 7h4v4H6z" fill="#bbb" stroke="none" /></Icon>
        <Icon className="ml-[7px] h-[16px] w-[16px]"><circle cx="7.500" cy="7.500" r="6.500" stroke="#222" /><path d="M1 7.500h13M7.500 1c-4 4-4 9 0 13M7.500 1c4 4 4 9 0 13M2 4h11M2 11h8" stroke="#222" /><circle cx="12" cy="12" r="3" fill="#eee" stroke="#222" /><path d="M10 14l4-4" stroke="#222" /></Icon>
        <Icon className="ml-[5px] h-[16px] w-[17px]"><path d="M1 6h2l4-3v10l-4-3H1z" stroke="#222" /><path d="M9 6q1.500 2 0 4" stroke="#222" /><path d="M11 4q3 4 0 8M13 2q4 6 0 12" stroke="#999" /></Icon>
        <div className="ml-[8px] w-[56px] text-center text-[11px] leading-[16px] tracking-[-0.400px] whitespace-nowrap text-[#111]">
          <div className="tracking-[-0.5px]">12:58</div>
          <div>05/05/2020</div>
        </div>
        <Icon className="ml-[15px] h-[16px] w-[17px]"><path d="M1 1h14v10H8l-3 3v-3H1z" fill="#111" stroke="#111" /><path d="M3 4h10M3 6.500h10M3 9h6" stroke="#eee" /><circle cx="12.500" cy="12" r="3" fill="#eee" stroke="#222" /><path d="M10.500 14l4-4" stroke="#222" /></Icon>
      </div>
    </footer>
  );
}

const menus = [
  { label: "File", width: "w-[29px]" },
  { label: "Edit", width: "w-[32px]" },
  { label: "View", width: "w-[37px]" },
  { label: "Insert", width: "w-[40px]" },
  { label: "Modify", width: "w-[49px]" },
  { label: "Text", width: "w-[33px]" },
  { label: "Commands", width: "w-[71px]" },
  { label: "Control", width: "w-[51px]" },
  { label: "Window", width: "w-[54px]" },
  { label: "Help", width: "w-[30px]" },
];

export default function App() {
  return (
    <div className="relative flex h-[720px] w-[1280px] flex-col overflow-hidden bg-[#858585] font-['DejaVu_Sans_Condensed','Noto_Sans',sans-serif] text-[#222]">
      <header className="h-[40px] shrink-0 bg-white font-['Noto_Sans',sans-serif]">
        <div className="flex h-[21px] items-center pl-[1px] text-[11.500px]">
          <FlashLogo className="h-[16px] w-[16px]" />
          <span className="ml-[5px] tracking-[-0.450px]">Macromedia Flash Professional 8 - [Untitled-1*]</span>
          <div className="mr-[16px] ml-auto flex items-center gap-[32px]">
            <Icon className="h-[11px] w-[11px]"><path d="M1 8h14" stroke="#222" strokeWidth="1.500" /></Icon>
            <Icon className="h-[11px] w-[11px]"><path d="M2 5h9v9H2zM5 5V2h9v9h-3" stroke="#222" strokeWidth="1.500" /></Icon>
            <Icon className="h-[11px] w-[11px]"><path d="M1.500 1.500l13 13M14.500 1.500l-13 13" stroke="#222" strokeWidth="1.400" /></Icon>
          </div>
        </div>
        <nav className="flex h-[19px] items-center pl-[7px] text-[11.500px] tracking-[-0.380px]">
          {menus.map((m) => (
            <span key={m.label} className={m.width}>{m.label}</span>
          ))}
        </nav>
      </header>
      <div className="flex h-[642px] shrink-0 border-b border-[#aaa]">
        <ToolsPanel />
        <div className="w-[6px] shrink-0 border-r border-[#666] bg-[#929292]" />
        <DocumentWindow />
        <div className="flex w-[6px] shrink-0 items-center border-r border-[#555] bg-[#929292]">
          <div className="flex h-[45px] w-[6px] items-center bg-[#ccc]">
            <div className="h-0 w-0 border-y-[4px] border-l-[4px] border-y-transparent border-l-white" />
          </div>
        </div>
        <aside className="flex w-[193px] shrink-0 flex-col">
          <ColorPanel />
          <LibraryPanel />
        </aside>
      </div>
      <Taskbar />

      <div className="pointer-events-none absolute inset-0 font-['Lato',sans-serif] whitespace-nowrap text-white/50 [text-shadow:0_2px_6px_rgba(0,0,0,0.12)]">
        <svg className="absolute top-[302px] left-[413px] h-[60px] w-[61px]" viewBox="0 0 61 60">
          <path d="M0 1h5l19 30L0 58zM18 1h43v56zM30 37l22 23H7z" fill="white" fillOpacity="0.500" />
        </svg>
        <span className="absolute top-[292px] left-[486px] text-[79.500px] leading-[79px] font-semibold tracking-[0.200px]">TechSmith</span>
        <span className="absolute top-[300px] left-[849px] text-[22px] leading-[22px]">®</span>
        <div className="absolute top-[393px] left-[222px] flex text-[32px] leading-[32px] font-bold">
          <span className="w-[155px] tracking-[10.100px]">MADE</span>
          <span className="w-[142px] tracking-[11px]">WITH</span>
          <span className="w-[268px] tracking-[11px]">CAMTASIA</span>
          <span className="w-[141px] tracking-[12.300px]">FREE</span>
          <span className="w-[135px] tracking-[10.200px]">TRIAL</span>
        </div>
      </div>
      <div className="pointer-events-none absolute top-[610px] left-[1007px] font-['Noto_Sans',sans-serif] whitespace-nowrap text-[#888]/60">
        <div className="text-[17px] leading-[22px] tracking-[0.400px]">Activate Windows</div>
        <div className="text-[13px] leading-[20px] tracking-[0.170px]">Go to Settings to activate Windows.</div>
      </div>
    </div>
  );
}
